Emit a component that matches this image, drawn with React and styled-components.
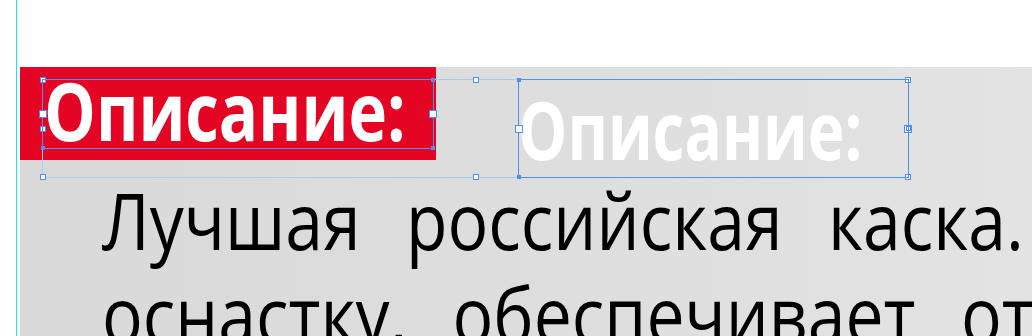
import React from 'react';
import styled, { createGlobalStyle } from 'styled-components';

const GlobalStyle = createGlobalStyle`
  body {
    margin: 0;
    background: #ffffff;
  }
`;

const Canvas = styled.div`
  position: relative;
  height: 336px;
  padding-top: 67px;
  box-sizing: border-box;
  overflow: hidden;
  background: #ffffff;
`;

const Guide = styled.div`
  position: absolute;
  left: 16px;
  top: 0;
  bottom: 0;
  width: 1px;
  background: #00f0ff;
`;

const Artboard = styled.div`
  margin-left: 20px;
  height: 269px;
  background: linear-gradient(90deg, #d9d9d9 0%, #dedede 55%, #e3e3e3 100%);
  display: flex;
  flex-direction: column;
`;

const Header = styled.div`
  display: flex;
  align-items: flex-start;
  gap: 82px;
`;

const Label = styled.div`
  width: 416px;
  height: 93px;
  box-sizing: border-box;
  padding: 3px 0 0 24px;
  background: #e30523;
`;

const Title = styled.div`
  font-family: 'Open Sans', 'Noto Sans', sans-serif;
  font-weight: 700;
  font-size: 80px;
  line-height: 80px;
  color: #ffffff;
  white-space: nowrap;
  transform: scaleX(${p => p.$scale});
  transform-origin: left center;
`;

const GhostBox = styled.div`
  margin-top: 12px;
  width: 390px;
  height: 98px;
  box-sizing: border-box;
  padding-top: 10px;
`;

const Body = styled.div`
  margin: -4px 0 0 82px;
  font-family: 'Open Sans', 'Noto Sans', sans-serif;
  font-size: 78px;
  line-height: 94px;
  color: #000000;
  word-spacing: 32px;
  transform: scaleX(0.87);
  transform-origin: left top;
`;

const Line = styled.div`
  white-space: nowrap;
`;

const Frame = styled.div`
  position: absolute;
  left: ${p => p.x}px;
  top: ${p => p.y}px;
  width: ${p => p.w}px;
  height: ${p => p.h}px;
  box-sizing: border-box;
  border: 1px solid ${p => p.$light ? '#a9caf6' : '#4d90f2'};
  pointer-events: none;
`;

const Handle = styled.div`
  position: absolute;
  left: ${p => p.h * 50}%;
  top: ${p => p.v * 50}%;
  transform: translate(-50%, -50%);
  width: ${p => p.size}px;
  height: ${p => p.size}px;
  box-sizing: border-box;
  background: ${p => p.$filled ? '#4d90f2' : '#ffffff'};
  border: 1.5px solid #4d90f2;
  display: flex;
  align-items: center;
  justify-content: center;
`;

const Inner = styled.div`
  width: 5px;
  height: 5px;
  box-sizing: border-box;
  background: #ffffff;
  border: 1px solid #4d90f2;
`;

// h / v: 0 = start, 1 = middle, 2 = end of the frame
const groupHandles = [
  [0, 0], [1, 0], [2, 0], [0, 2], [1, 2], [2, 2], [0, 1],
];

export default function App() {
  return (
    <>
      <GlobalStyle />
      <Canvas>
        <Guide />
        <Artboard>
          <Header>
            <Label>
              <Title $scale={0.815}>Описание:</Title>
            </Label>
            <GhostBox>
              <Title $scale={0.776}>Описание:</Title>
            </GhostBox>
          </Header>
          <Body>
            <Line>Лучшая российская каска. Имеет удобную</Line>
            <Line>оснастку, обеспечивает отличную защиту</Line>
          </Body>
        </Artboard>

        <Frame x={42} y={79} w={867} h={99} $light>
          {groupHandles.map(([h, v], i) => (
            <Handle key={i} h={h} v={v} size={6} />
          ))}
          <Handle h={2} v={1} size={8}>
            <Inner />
          </Handle>
        </Frame>
        <Frame x={42} y={79} w={392} h={70}>
          <Handle h={0} v={1} size={8} />
          <Handle h={2} v={1} size={8} />
          <Handle h={2} v={0} size={4} $filled />
          <Handle h={2} v={2} size={4} $filled />
          <Handle h={0} v={2} size={4} $filled />
        </Frame>
        <Frame x={518} y={79} w={391} h={99}>
          <Handle h={0} v={1} size={8} />
          <Handle h={0} v={0} size={4} $filled />
          <Handle h={0} v={2} size={4} $filled />
        </Frame>
      </Canvas>
    </>
  );
}
